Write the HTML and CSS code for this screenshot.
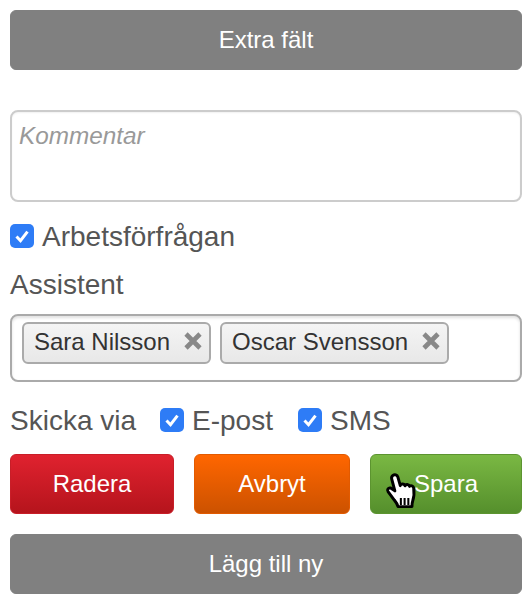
FILE: index.html
```html
<!DOCTYPE html>
<html lang="sv">
<head>
<meta charset="utf-8">
<title>Formulär</title>
<link rel="stylesheet" href="styles.css">
</head>
<body>
<form class="form">
  <button type="button" class="btn btn-gray">Extra fält</button>
  <textarea class="comment" placeholder="Kommentar"></textarea>
  <label class="check check-work"><span class="box"><svg viewBox="0 0 24 24"><path d="M6.5 12.500l4 4.200 7-9" /></svg></span>Arbetsförfrågan</label>
  <div class="label">Assistent</div>
  <div class="tags">
    <span class="tag">Sara Nilsson<span class="x"><svg viewBox="0 0 22 22"><path d="M4 4l14 14M18 4L4 18"/></svg></span></span>
    <span class="tag">Oscar Svensson<span class="x"><svg viewBox="0 0 22 22"><path d="M4 4l14 14M18 4L4 18"/></svg></span></span>
  </div>
  <div class="via">
    <span class="via-label">Skicka via</span>
    <label class="check"><span class="box"><svg viewBox="0 0 24 24"><path d="M6.5 12.500l4 4.200 7-9" /></svg></span>E-post</label>
    <label class="check"><span class="box"><svg viewBox="0 0 24 24"><path d="M6.5 12.500l4 4.200 7-9" /></svg></span>SMS</label>
  </div>
  <div class="actions">
    <button type="button" class="btn btn-red">Radera</button>
    <button type="button" class="btn btn-orange">Avbryt</button>
    <button type="button" class="btn btn-green">Spara
      <svg class="cursor" viewBox="0 0 30 38"><path class="hand" d="M7 3.500c1.600-1.300 3.700-.6 4.300 1.300l2.200 7.700c.3-1.900 3.600-2 4.200.2.500-1.700 3.500-1.600 4 .5.900-1.200 3.300-.7 3.600 1.400.5 3.500.3 8-.8 11.200-.6 1.800-.7 3.400-.7 5.200H11.500c-.5-2.300-1.700-3.800-3.300-5.800L2.700 17.800c-1.200-1.700.3-3.800 2.300-3.200l3.700 2.500L5.900 6.600C5.600 5.400 6 4.300 7 3.500z"/><path class="lines" d="M14 23.500v6M17.300 23.500v6M20.600 23.500v6"/></svg>
    </button>
  </div>
  <button type="button" class="btn btn-gray btn-last">Lägg till ny</button>
</form>
</body>
</html>
```
FILE: styles.css
```css
* { box-sizing: border-box; }
html, body { margin: 0; background: #fff; }
body { font-family: "Liberation Sans", Arial, sans-serif; color: #555; }
.form { width: 532px; padding: 10px; display: flex; flex-direction: column; }
.btn {
  display: block; height: 60px; border-radius: 6px; border: 1px solid transparent;
  color: #fff; font: 24px/1 "Liberation Sans", Arial, sans-serif; padding: 0;
}
.btn-gray { width: 100%; background: #808080; border-color: #808080; }
.comment {
  display: block; width: 100%; height: 92px; margin-top: 40px; padding: 9px 7px;
  border: 2px solid #ccc; border-radius: 8px; resize: none; outline: none;
  font: italic 24.3px/1.2 "Liberation Sans", Arial, sans-serif; color: #555;
  box-shadow: inset 0 1px 2px rgba(0,0,0,.06);
}
.comment::placeholder { color: #999; opacity: 1; }
.check { display: flex; align-items: center; gap: 8px; height: 36px; padding-top: 2px; font-size: 28px; line-height: 36px; }
.check-work { margin-top: 16px; }
.box { width: 24px; height: 24px; margin-top: -2px; border-radius: 5px; background: #2e7cf6; display: block; flex: none; }
.box svg { display: block; width: 24px; height: 24px; fill: none; stroke: #fff; stroke-width: 3; }
.label { font-size: 28px; line-height: 36px; height: 36px; padding-top: 1px; margin-top: 12px; }
.tags {
  height: 68px; margin-top: 12px; padding: 6px 10px; border: 2px solid #aaa; border-radius: 8px;
  display: flex; gap: 9px; align-items: flex-start;
  box-shadow: inset 0 2px 3px rgba(0,0,0,.12);
}
.tag {
  height: 42px; display: flex; align-items: center; padding: 0 5px 2px 10px; gap: 12px;
  border: 2px solid #aaa; border-radius: 6px; color: #333; font-size: 24px;
  background: linear-gradient(#f4f4f4, #e8e8e8);
}
.x { display: block; width: 22px; height: 22px; margin-top: -2px; }
.x svg { display: block; width: 22px; height: 22px; fill: none; stroke: #888; stroke-width: 4.600; }
.via { display: flex; align-items: center; margin-top: 20px; height: 36px; font-size: 28px; }
.via-label { margin-right: 24px; padding-top: 2px; }
.via .check + .check { margin-left: 25px; }
.actions { display: flex; gap: 20px; margin-top: 16px; }
.btn-red { width: 164px; background: linear-gradient(#e0222f, #b5141c); border-color: #c81e28; }
.btn-orange { width: 156px; background: linear-gradient(#ff6600, #cc5200); border-color: #e25a00; }
.btn-green { width: 152px; background: linear-gradient(#7ab843, #558f2c); border-color: #5c9430; position: relative; padding-left: 0; }
.cursor { position: absolute; left: 14px; top: 16px; width: 34px; height: 44px; }
.hand { fill: #fff; stroke: #000; stroke-width: 2.600; stroke-linejoin: round; }
.lines { fill: none; stroke: #000; stroke-width: 1.800; }
.btn-last { margin-top: 20px; }
```
